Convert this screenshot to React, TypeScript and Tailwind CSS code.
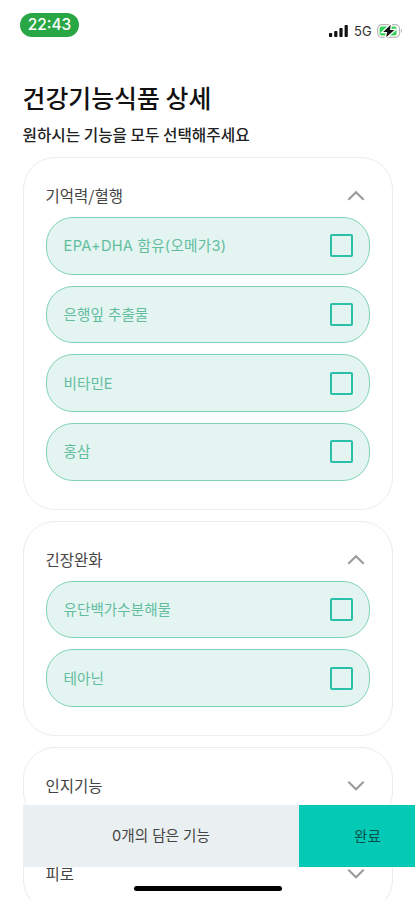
import React from "react";

function Chevron({ open }: { open: boolean }) {
  return (
    <svg className="mt-px h-[11px] w-[18px] shrink-0" viewBox="0 0 18 11" fill="none" stroke="#999b9b" strokeWidth="2.1">
      <path d={open ? "M1.3 9.8 9 2.2l7.7 7.6" : "M1.3 1.7 9 9.3l7.7-7.6"} />
    </svg>
  );
}

function Option({ label }: { label: string }) {
  const mixed = label.startsWith("EPA");
  return (
    <li className="flex h-[57.5px] items-center justify-between rounded-[27px] border-[1.5px] border-[#7fd2b9] bg-[#e4f4f1] pr-4 pl-[17px]">
      <span className={`pt-px font-['Inter','Noto_Sans_CJK_KR',sans-serif] text-[14.6px] leading-5 whitespace-nowrap text-[#62bd9f] ${mixed ? "tracking-[0.26px]" : ""}`}>
        {label}
      </span>
      <span className="h-[23px] w-[23px] rounded-[2px] border-2 border-[#2abfa9]" />
    </li>
  );
}

function Card({ title, items = [] }: { title: string; items?: string[] }) {
  const open = items.length > 0;
  return (
    <section className={`shrink-0 rounded-[32px] border-[1.5px] border-[#ececec] bg-white px-[22px] pt-[25px] ${open ? "pb-[28px]" : "pb-[26px]"}`}>
      <div className="flex h-6 items-center justify-between pr-[5px]">
        <h2 className="text-[15.5px] leading-6 text-[#444]">{title}</h2>
        <Chevron open={open} />
      </div>
      {open && (
        <ul className="mt-[10px] flex flex-col gap-[11.2px]">
          {items.map((item) => (
            <Option key={item} label={item} />
          ))}
        </ul>
      )}
    </section>
  );
}

function StatusBar() {
  return (
    <div className="flex h-[83px] items-start justify-between pt-[13px] pr-[12px] pl-5">
      <span className="flex h-6 w-[59px] items-center justify-center rounded-full bg-[#29a744] font-['Inter'] text-[15.5px] font-medium text-white">
        22:43
      </span>
      <div className="mt-[10px] flex h-4 items-center">
        <svg className="h-3 w-5" viewBox="0 0 20 12" fill="#111">
          <rect x="0" y="8" width="3.2" height="4" rx="0.8" />
          <rect x="5.2" y="6" width="3.2" height="6" rx="0.8" />
          <rect x="10.4" y="3" width="3.2" height="9" rx="0.8" />
          <rect x="15.6" y="0" width="3.2" height="12" rx="0.8" />
        </svg>
        <span className="ml-[5px] w-[19px] font-['Inter'] text-[13px] leading-4 text-[#333]">5G</span>
        <svg className="ml-[4px] h-[14px] w-[26px]" viewBox="0 0 26 14">
          <rect x="0.7" y="0.7" width="21.8" height="12.6" rx="4" fill="white" stroke="#b8bab8" strokeWidth="1.2" />
          <rect x="2.6" y="2.6" width="17" height="8.8" rx="2.2" fill="#35cf59" />
          <path d="M13.7.8 6.2 8h4L9.1 13.2 17.4 6h-4.4z" fill="#111" stroke="white" strokeWidth="2.6" paintOrder="stroke" />
          <path d="M24 4.8q2 2.2 0 4.4z" fill="#aaa" />
        </svg>
      </div>
    </div>
  );
}

export default function App() {
  return (
    <div className="relative h-[900px] w-[415px] overflow-hidden bg-white font-['Noto_Sans_CJK_KR','Noto_Sans',sans-serif]">
      <StatusBar />
      <header className="pl-[22.5px]">
        <h1 className="h-[38px] text-[24.9px] leading-[28px] font-medium text-[#111]">건강기능식품 상세</h1>
        <p className="h-[36px] text-[15.7px] leading-7 font-medium text-[#222]">원하시는 기능을 모두 선택해주세요</p>
      </header>
      <main className="mr-[22px] ml-[22.6px] flex flex-col gap-[11px]">
        <Card title="기억력/혈행" items={["EPA+DHA 함유(오메가3)", "은행잎 추출물", "비타민E", "홍삼"]} />
        <Card title="긴장완화" items={["유단백가수분해물", "테아닌"]} />
        <Card title="인지기능" />
        <Card title="피로" />
      </main>
      <footer className="absolute top-[805px] right-0 left-[23px] flex h-[62px] text-[14.6px]">
        <div className="flex w-[276px] items-center justify-center bg-[#eaeff1] pt-[2px] font-['Inter','Noto_Sans_CJK_KR',sans-serif] text-[#444]">0개의 담은 기능</div>
        <button className="flex flex-1 items-center justify-center bg-[#04cab5] pl-[21px] text-[#07524b]">완료</button>
      </footer>
      <div className="absolute top-[886px] left-[134px] h-[5px] w-[148px] rounded-full bg-black" />
    </div>
  );
}
